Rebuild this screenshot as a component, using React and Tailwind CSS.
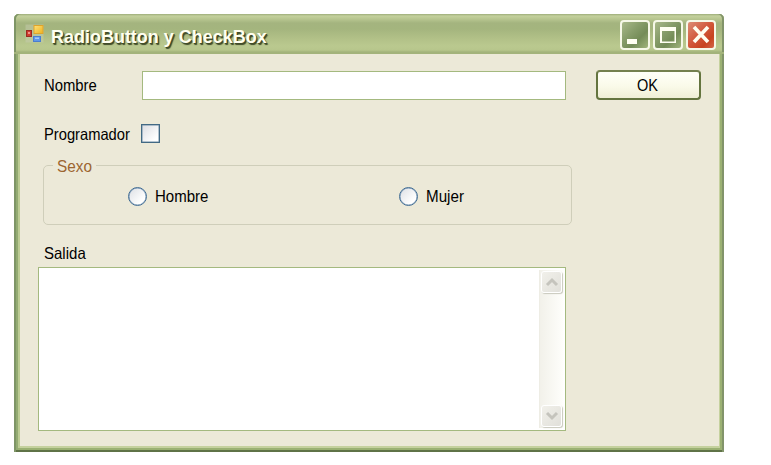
import React from "react";

function Label({ children, className = "" }) {
  return (
    <span className={`block origin-left whitespace-nowrap text-[16.5px] leading-[20px] ${className}`}>
      {children}
    </span>
  );
}

function AppIcon() {
  return (
    <svg width="20" height="20" viewBox="0 0 20 20" className="mt-[2px] block shrink-0">
      <defs>
        <linearGradient id="yel" x1="0" y1="0" x2="1" y2="1">
          <stop offset="0" stopColor="#ffe27a" />
          <stop offset="1" stopColor="#eeb01c" />
        </linearGradient>
      </defs>
      <rect x="0.5" y="0.5" width="18" height="18" fill="#c9cfb4" opacity="0.45" />
      <rect x="1.5" y="6.5" width="5" height="6" fill="#d0392e" stroke="#9a2a20" />
      <rect x="3" y="8" width="2" height="2" fill="#ef9185" />
      <rect x="9" y="1.5" width="9" height="8" fill="url(#yel)" stroke="#dfa42a" />
      <rect x="8.5" y="12.5" width="7" height="5" fill="#5f98e8" stroke="#4a7ecf" />
      <rect x="10" y="13.5" width="4" height="1.5" fill="#a5c8fa" />
    </svg>
  );
}

function CaptionButton({ children, close }) {
  return (
    <div
      className={`flex h-[30px] w-[30px] items-center justify-center rounded-[4px] border-2 border-[#f6f8e8] ${
        close
          ? "bg-[linear-gradient(135deg,#dc8d76_0%,#d2593d_45%,#c8431f_75%,#d2664a_100%)]"
          : "bg-[linear-gradient(135deg,#a9b98a_0%,#869c69_40%,#748c57_65%,#a0b47c_100%)]"
      }`}
    >
      <svg width="26" height="26" viewBox="0 0 26 26" className="block shrink-0">
        {children}
      </svg>
    </div>
  );
}

function Radio({ label, scale }) {
  return (
    <div className="flex items-center">
      <div className="h-[19px] w-[19px] rounded-full border-[1.5px] border-[#426d94] bg-[linear-gradient(135deg,#dcdfe4,#ffffff_75%)] shadow-[inset_0_0_0_0.5px_#7596b5]" />
      <Label className={`ml-[8px] ${scale}`}>{label}</Label>
    </div>
  );
}

function ScrollButton({ d }) {
  return (
    <div className="flex h-[22px] w-[21px] shrink-0 items-center justify-center rounded-[3px] border border-white bg-[linear-gradient(135deg,#f1f0ea,#e1e0da)] shadow-[1px_1px_1px_#c9c9bd]">
      <svg width="14" height="14" viewBox="0 0 14 14" className="block">
        <path d={d} fill="none" stroke="#c5c4bd" strokeWidth="3" />
      </svg>
    </div>
  );
}

export default function App() {
  return (
    <div className="h-[465px] w-[771px] overflow-hidden bg-white pl-[14px] pt-[14px] font-['Liberation_Sans',Arial,sans-serif] text-black">
      <div className="flex h-[438px] w-[710px] flex-col rounded-t-[5px] bg-[#ece9d8] shadow-[inset_2px_0_#7e9566,inset_-2px_0_#82946a,inset_0_-2px_#5f7347,inset_4px_0_#93ab72,inset_-4px_-4px_#9bb173,inset_6px_0_#bccb93,inset_-5px_-6px_#c5d19e]">
        <header className="flex h-[40px] shrink-0 items-center rounded-t-[5px] border-b-2 border-[#a3b37b] bg-[linear-gradient(180deg,#9dad79_0px,#c3d09d_2px,#bcca94_4px,#a4b47f_9px,#a4b57e_15px,#b1c087_24px,#bac98f_32px,#b7c68c_36px,#a3b37b_38px)] pl-[11px] pr-[8px] shadow-[inset_2px_0_#7e9566,inset_-2px_0_#82946a]">
          <AppIcon />
          <h1 className="ml-[6px] mt-[8px] origin-left scale-x-[0.946] whitespace-nowrap text-[19px] font-bold leading-[24px] text-[#fffff0] [text-shadow:1px_1px_0_#414c29,1.5px_1.5px_1px_#414c29]">
            RadioButton y CheckBox
          </h1>
          <div className="ml-auto mt-[4px] flex gap-[3px]">
            <CaptionButton>
              <rect x="5" y="17" width="10" height="5" fill="#fffff2" />
            </CaptionButton>
            <CaptionButton>
              <path d="M5 5H21V21H5Z M7 9V19.5H19.5V9Z" fill="#fffff2" fillRule="evenodd" />
            </CaptionButton>
            <CaptionButton close>
              <path d="M6 5L20 20M20 5L6 20" stroke="#fffdf0" strokeWidth="3.6" />
            </CaptionButton>
          </div>
        </header>

        <main className="flex flex-col pl-[24px]">
          <div className="mt-[16px] flex h-[30px] items-center">
            <div className="w-[104px] pl-[6px]">
              <Label className="scale-x-[0.9]">Nombre</Label>
            </div>
            <div className="h-[29px] w-[424px] border border-[#a4b97f] bg-white" />
            <div className="ml-[30px] flex h-[30px] w-[105px] items-center justify-center rounded-[4px] border-2 border-[#64743f] border-t-[#74804f] bg-[linear-gradient(180deg,#fffff8_0%,#fafae9_55%,#efeed6_100%)]">
              <Label className="origin-center scale-x-[0.88]">OK</Label>
            </div>
          </div>

          <div className="mt-[24px] flex h-[19px] items-center pl-[6px]">
            <div className="w-[97px]">
              <Label className="scale-x-[0.892]">Programador</Label>
            </div>
            <div className="h-[19px] w-[19px] border-[1.5px] border-[#426984] bg-[linear-gradient(135deg,#dcdde2,#ffffff_80%)] shadow-[inset_0_0_0_0.5px_#6d8ca3]" />
          </div>

          <fieldset className="ml-[5px] mt-[13px] h-[69px] w-[529px] rounded-[5px] border border-[#cfceba] pl-[9px]">
            <legend className="h-[19px] w-[43px] pl-[4px] text-[#9c6530]">
              <Label className="scale-x-[0.93]">Sexo</Label>
            </legend>
            <div className="ml-[75px] mt-[11px] flex">
              <div className="w-[271px]">
                <Radio label="Hombre" scale="scale-x-[0.91]" />
              </div>
              <Radio label="Mujer" scale="scale-x-[0.92]" />
            </div>
          </fieldset>

          <div className="mt-[18px] h-[24px] pl-[6px]">
            <Label className="scale-x-[0.91]">Salida</Label>
          </div>

          <div className="flex h-[164px] w-[528px] justify-end border border-[#a4b97f] bg-white p-[2px]">
            <div className="flex w-[24px] flex-col items-center justify-between border-l border-[#eeede5] bg-[linear-gradient(90deg,#f2f1ea,#fefefb)] py-[1px]">
              <ScrollButton d="M2 10L7 5L12 10" />
              <ScrollButton d="M2 4L7 9L12 4" />
            </div>
          </div>
        </main>
      </div>
    </div>
  );
}
